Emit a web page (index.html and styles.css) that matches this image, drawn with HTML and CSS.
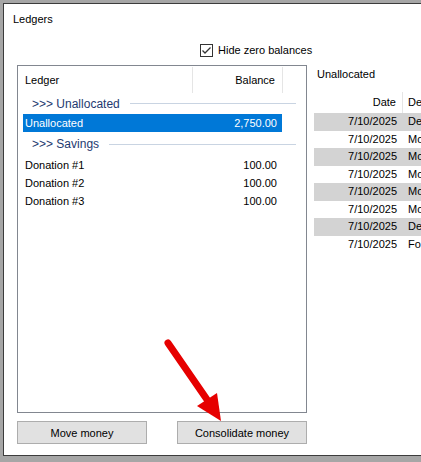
FILE: index.html
```html
<!DOCTYPE html>
<html lang="en">
<head>
    <meta charset="UTF-8">
    <meta name="viewport" content="width=device-width, initial-scale=1.0">
    <title>Ledgers</title>
    <link rel="stylesheet" href="styles.css">
</head>
<body>
    <div class="window">
        <div class="title">Ledgers</div>

        <label class="options">
            <span class="check-box">
                <svg width="11" height="11" viewBox="0 0 11 11"><polyline points="1.5,5.5 4,8 9.5,2.5" fill="none" stroke="#333" stroke-width="1.3"/></svg>
            </span>
            <span>Hide zero balances</span>
        </label>

        <div class="main">
            <div class="ledger-list">
                <div class="list-header">
                    <div class="col-name">Ledger</div>
                    <div class="col-balance">Balance</div>
                </div>

                <div class="group first">
                    <span>&gt;&gt;&gt; Unallocated</span>
                    <span class="group-line"></span>
                </div>
                <div class="ledger-row selected">
                    <span>Unallocated</span>
                    <span>2,750.00</span>
                </div>

                <div class="group">
                    <span>&gt;&gt;&gt; Savings</span>
                    <span class="group-line"></span>
                </div>
                <div class="ledger-row">
                    <span>Donation #1</span>
                    <span>100.00</span>
                </div>
                <div class="ledger-row">
                    <span>Donation #2</span>
                    <span>100.00</span>
                </div>
                <div class="ledger-row">
                    <span>Donation #3</span>
                    <span>100.00</span>
                </div>
            </div>

            <div class="detail">
                <div class="detail-title">Unallocated</div>
                <div class="tx-header">
                    <div class="tx-date">Date</div>
                    <div class="tx-desc">De</div>
                </div>
                <div class="tx-row alt"><div class="tx-date">7/10/2025</div><div class="tx-desc">De</div></div>
                <div class="tx-row"><div class="tx-date">7/10/2025</div><div class="tx-desc">Mo</div></div>
                <div class="tx-row alt"><div class="tx-date">7/10/2025</div><div class="tx-desc">Mo</div></div>
                <div class="tx-row"><div class="tx-date">7/10/2025</div><div class="tx-desc">Mo</div></div>
                <div class="tx-row alt"><div class="tx-date">7/10/2025</div><div class="tx-desc">Mo</div></div>
                <div class="tx-row"><div class="tx-date">7/10/2025</div><div class="tx-desc">Mo</div></div>
                <div class="tx-row alt"><div class="tx-date">7/10/2025</div><div class="tx-desc">De</div></div>
                <div class="tx-row"><div class="tx-date">7/10/2025</div><div class="tx-desc">Fo</div></div>
            </div>
        </div>

        <div class="buttons">
            <button class="btn">Move money</button>
            <button class="btn btn-gap">Consolidate money</button>
        </div>
    </div>

    <!-- annotation arrow over the screenshot -->
    <svg class="arrow" width="421" height="462" viewBox="0 0 421 462">
        <line x1="168" y1="343" x2="208" y2="401" stroke="#e60000" stroke-width="7" stroke-linecap="round"/>
        <polygon points="221,421 197,406 217,393" fill="#e60000"/>
    </svg>
</body>
</html>
```

FILE: styles.css
```css
* {
    margin: 0;
    padding: 0;
    box-sizing: border-box;
}

body {
    background-color: #a6a6a6;
    font-family: 'Liberation Sans', Arial, sans-serif;
    font-size: 11px;
    color: #000;
    width: 421px;
    height: 462px;
    overflow: hidden;
    position: relative;
}

.window {
    margin: 3px 0 0 3px;
    width: 418px;
    height: 453px;
    background-color: #fff;
    border: 1px solid #3c3c3c;
    border-right: none;
    overflow: hidden;
}

.title {
    padding: 8px 0 0 9px;
    height: 22px;
    line-height: 14px;
}

.options {
    display: flex;
    align-items: center;
    gap: 5px;
    margin: 18px 0 0 196px;
    height: 13px;
    line-height: 13px;
}

.check-box {
    width: 13px;
    height: 13px;
    border: 1px solid #333;
    display: flex;
    align-items: center;
    justify-content: center;
}

.main {
    display: flex;
    margin-top: 8px;
}

.ledger-list {
    flex: none;
    margin-left: 13px;
    width: 290px;
    height: 348px;
    border: 1px solid #828790;
}

.list-header {
    display: flex;
    height: 27px;
}

.col-name {
    width: 175px;
    padding-left: 7px;
    border-right: 1px solid #e5e5e5;
    margin-top: 1px;
    line-height: 26px;
}

.col-balance {
    width: 90px;
    padding-right: 7px;
    text-align: right;
    border-right: 1px solid #e5e5e5;
    margin-top: 1px;
    line-height: 26px;
}

.group {
    display: flex;
    align-items: center;
    gap: 10px;
    height: 24px;
    padding: 0 10px 0 14px;
    font-size: 12px;
    color: #1e3a70;
    white-space: nowrap;
}

.group.first {
    height: 21px;
}

.group-line {
    flex: 1;
    height: 1px;
    background-color: #c9d4e2;
}

.ledger-row {
    display: flex;
    justify-content: space-between;
    align-items: center;
    height: 18px;
    margin-left: 5px;
    width: 259px;
    padding: 0 5px 0 2px;
}

.ledger-row.selected {
    background-color: #0078d7;
    color: #fff;
}

.detail {
    margin-left: 7px;
    flex: 1;
    min-width: 0;
}

.detail-title {
    height: 18px;
    line-height: 18px;
    padding-left: 3px;
    margin-bottom: 9px;
}

.tx-header,
.tx-row {
    display: flex;
    white-space: nowrap;
}

.tx-header {
    height: 21px;
    line-height: 20px;
}

.tx-header .tx-date {
    border-right: 1px solid #e5e5e5;
}

.tx-row {
    height: 17.5px;
    line-height: 17.5px;
}

.tx-row.alt {
    background-color: #d3d3d3;
}

.tx-date {
    flex: none;
    width: 89px;
    padding-right: 6px;
    text-align: right;
}

.tx-desc {
    padding-left: 5px;
}

.buttons {
    display: flex;
    margin: 8px 0 0 13px;
}

.btn {
    width: 130px;
    height: 23px;
    background-color: #e1e1e1;
    border: 1px solid #adadad;
    font-family: 'Liberation Sans', Arial, sans-serif;
    font-size: 11px;
    color: #000;
}

.btn-gap {
    margin-left: 30px;
}

.arrow {
    position: absolute;
    left: 0;
    top: 0;
}
```
